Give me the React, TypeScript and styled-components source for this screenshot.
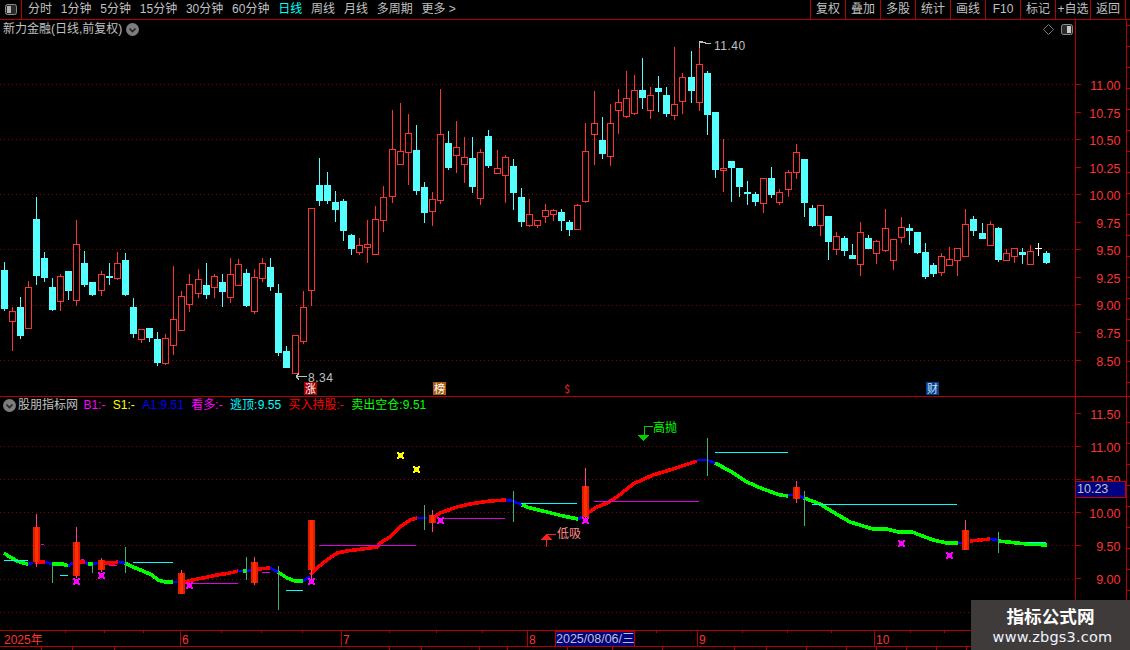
import React from "react";
import styled, { createGlobalStyle } from "styled-components";

const FRAME = "#b80000";
const RED = "#ff3232";
const CYAN = "#54ffff";
const GREY = "#c0c0c0";

const Global = createGlobalStyle`
  html, body { margin: 0; padding: 0; background: #000; overflow: hidden; }
  #root { width: 1130px; height: 650px; }
`;

const Page = styled.div`
  position: relative;
  width: 1130px;
  height: 650px;
  display: flex;
  flex-direction: column;
  overflow: hidden;
  background: #000;
  color: ${GREY};
  font: 12px "Liberation Sans", "Noto Sans CJK SC", sans-serif;
`;

const Toolbar = styled.div`
  flex: 0 0 20px;
  box-sizing: border-box;
  display: flex;
  align-items: center;
  border-bottom: 1px solid ${FRAME};
  line-height: 19px;
`;
const ToggleCell = styled.div`
  flex: 0 0 22px;
  height: 19px;
  box-sizing: border-box;
  border-right: 1px solid ${FRAME};
  display: flex;
  align-items: center;
  justify-content: center;
`;
const PeriodTabs = styled.div`
  display: flex;
  gap: 8.8px;
  margin-left: 6px;
  flex: 1;
`;
const PeriodTab = styled.span<{ $active?: boolean }>`
  color: ${(p) => (p.$active ? "#00ffff" : GREY)};
  white-space: nowrap;
`;
const ActionGroup = styled.div`
  display: flex;
  margin-right: 4px;
  border-right: 1px solid ${FRAME};
`;
const ActionButton = styled.span`
  width: 35px;
  height: 19px;
  box-sizing: border-box;
  border-left: 1px solid ${FRAME};
  text-align: center;
  white-space: nowrap;
`;

const ChartRow = styled.div<{ $h: number }>`
  flex: 0 0 ${(p) => p.$h}px;
  box-sizing: border-box;
  display: flex;
  border-bottom: 1px solid ${FRAME};
`;
const PlotArea = styled.div`
  position: relative;
  flex: 0 0 1075px;
`;
const AxisArea = styled.div`
  position: relative;
  flex: 1;
  box-sizing: border-box;
  border-left: 1px solid ${FRAME};
`;
const ChartSvg = styled.svg`
  display: block;
  position: absolute;
  top: 0;
  left: 0;
`;
const Legend = styled.div<{ $top: number; $gap: number }>`
  position: absolute;
  top: ${(p) => p.$top}px;
  left: 3px;
  display: flex;
  align-items: center;
  gap: ${(p) => p.$gap}px;
  line-height: 15px;
  white-space: nowrap;
  word-spacing: -3px;
`;
const LegendHead = styled.div`
  display: flex;
  align-items: center;
  gap: 2px;
  margin-right: -2px;
`;
const LegendItem = styled.span<{ $color: string }>`
  color: ${(p) => p.$color};
`;
const CornerTools = styled.div`
  position: absolute;
  top: 4px;
  right: 2px;
  display: flex;
  align-items: center;
  gap: 7px;
`;
const LastPriceBadge = styled.div`
  position: absolute;
  top: 84px;
  left: 0;
  width: 50px;
  height: 17px;
  box-sizing: border-box;
  background: #000080;
  border: 1px solid #c00000;
  border-left: none;
  padding-left: 1px;
  font-size: 12.5px;
  line-height: 15px;
  color: ${GREY};
`;

const TimeAxisRow = styled.div`
  flex: 0 0 16px;
  box-sizing: border-box;
  border-bottom: 1px solid ${FRAME};
  position: relative;
`;
const BottomTabs = styled.div`
  flex: 1;
  display: flex;
`;
const BottomTab = styled.span<{ $w: number }>`
  flex: 0 0 ${(p) => p.$w}px;
  box-sizing: border-box;
  border-right: 1px solid ${FRAME};
`;

const Watermark = styled.div`
  position: absolute;
  right: 0;
  bottom: 0;
  width: 159px;
  height: 50px;
  background: #3f3b3b;
  display: flex;
  flex-direction: column;
  align-items: center;
  padding-top: 4px;
  box-sizing: border-box;
`;
const WatermarkTitle = styled.div`
  font: bold 17.6px "Noto Sans CJK SC", sans-serif;
  line-height: 24px;
  color: #fff;
`;
const WatermarkUrl = styled.div`
  font: 14.5px "DejaVu Sans", sans-serif;
  line-height: 18px;
  color: #eef4ff;
  letter-spacing: 0.2px;
  transform: translateX(2px);
`;

const AxisText = styled.text`
  fill: ${RED};
  font: 12.5px "Liberation Sans", sans-serif;
  text-anchor: end;
`;
const TimeText = styled.text`
  fill: ${RED};
  font: 12px "Liberation Sans", "Noto Sans CJK SC", sans-serif;
`;
const DateText = styled.text`
  fill: ${GREY};
  font: 12.5px "Liberation Sans", "Noto Sans CJK SC", sans-serif;
`;
const PriceNote = styled.text`
  fill: ${GREY};
  font: 12px "Liberation Sans", sans-serif;
  letter-spacing: 0.5px;
`;
const BadgeText = styled.text<{ $color: string }>`
  fill: ${(p) => p.$color};
  font: 11px "Noto Sans CJK SC", sans-serif;
  text-anchor: middle;
`;
const SignalText = styled.text<{ $color: string }>`
  fill: ${(p) => p.$color};
  font: 12px "Noto Sans CJK SC", sans-serif;
`;

// x, 'r'/'c', high, bodyTop, bodyBottom, low — page pixel coordinates
type C = [number, "r" | "c", number, number, number, number];
const candles: C[] = [
  [4,"c",262,270,309,311],[12,"r",307,311,321,351],[20,"c",297,307,336,339],[28,"r",281,287,328,329],
  [36,"c",197,219,276,285],[44,"c",252,258,278,282],[52,"c",278,287,310,311],[60,"r",274,276,301,311],
  [68,"c",271,271,291,300],[76,"r",220,244,300,306],[84,"c",251,263,285,287],[92,"c",282,282,295,296],
  [101,"r",271,274,290,296],[109,"c",263,276,277,285],[117,"r",252,263,278,280],[125,"c",253,260,295,296],
  [133,"c",298,307,334,338],[141,"r",329,329,339,343],[149,"c",328,328,338,342],[157,"c",332,339,363,366],
  [165,"r",334,338,363,365],[173,"r",266,319,345,355],[181,"r",291,296,330,330],[189,"r",274,284,304,312],
  [198,"r",269,279,293,298],[206,"c",263,285,295,299],[214,"r",274,276,287,298],[222,"c",274,282,292,307],
  [230,"r",258,274,297,303],[238,"r",259,264,285,285],[246,"c",269,273,306,307],[254,"r",269,277,311,314],
  [262,"r",258,263,278,282],[270,"c",258,267,287,291],[278,"c",284,293,353,356],[286,"c",346,351,368,368],
  [295,"r",335,335,373,373],[303,"r",291,307,341,344],[311,"r",208,208,290,306],[319,"c",158,185,201,206],
  [327,"c",172,185,201,204],[335,"c",191,202,210,222],[343,"c",199,201,231,241],[351,"c",234,235,249,255],
  [359,"r",238,245,252,255],[367,"r",220,244,247,263],[375,"r",206,219,254,254],
  [383,"r",186,197,220,232],[392,"r",110,149,196,203],[400,"r",103,151,164,165],[408,"r",114,133,152,185],
  [416,"c",125,150,191,195],[424,"c",182,187,213,223],[432,"r",192,199,211,226],[440,"r",89,134,200,204],
  [448,"c",131,143,168,170],[456,"r",121,147,155,173],[464,"r",137,157,164,183],[472,"c",137,158,187,193],
  [480,"r",149,152,198,205],[488,"c",130,136,166,168],[497,"r",150,168,173,174],[505,"r",155,157,175,203],
  [513,"c",159,166,193,210],[521,"c",188,197,222,227],[529,"r",199,214,225,227],[537,"r",220,220,225,228],
  [545,"r",204,210,216,223],[553,"r",209,210,214,221],[561,"c",209,212,221,231],[569,"c",220,222,230,236],
  [577,"r",204,205,229,230],[585,"r",123,151,201,203],[594,"r",91,123,134,165],[602,"c",117,140,154,159],
  [610,"r",104,123,156,166],[618,"r",89,102,110,134],[626,"r",71,98,116,118],[634,"r",75,90,113,115],
  [642,"c",58,90,98,109],[650,"r",87,95,110,119],[658,"c",76,88,92,112],[666,"c",87,95,114,117],
  [674,"r",47,104,115,120],[682,"r",73,77,101,114],[691,"c",51,77,91,103],[699,"r",43,64,102,111],
  [707,"c",71,73,115,135],[715,"c",112,112,170,178],[723,"r",139,168,170,192],[731,"c",161,161,168,202],
  [739,"c",168,168,187,197],[747,"c",181,192,194,205],[755,"c",192,194,202,206],[763,"r",178,178,203,213],
  [771,"c",167,178,195,198],[779,"r",189,192,202,205],[788,"r",170,172,189,197],[796,"r",144,152,172,179],
  [804,"c",159,159,203,217],[812,"c",205,208,226,227],[820,"r",205,205,225,236],[828,"c",216,216,242,260],
  [836,"r",232,236,249,255],[844,"c",236,238,251,256],[852,"c",244,255,259,259],[860,"r",222,232,264,276],
  [868,"c",235,238,249,249],[876,"r",240,241,253,264],[885,"r",209,228,250,252],[893,"r",239,239,260,270],
  [901,"r",217,227,237,243],[909,"c",224,228,231,245],[917,"c",232,232,253,254],[925,"c",243,252,277,279],
  [933,"c",263,265,274,277],[941,"r",253,256,272,276],[949,"r",247,259,265,265],[957,"r",248,248,260,276],
  [965,"r",209,224,256,256],[973,"c",216,219,231,236],[982,"c",223,233,239,239],[990,"r",221,224,245,245],
  [998,"c",227,228,260,262],[1006,"r",249,253,260,260],[1014,"r",248,248,256,263],[1022,"c",248,252,255,264],
  [1030,"r",245,251,264,265],[1046,"c",251,253,263,264],
];

function Candle({ c }: { c: C }) {
  const [x, kind, hi, top, bot, lo] = c;
  const col = kind === "r" ? RED : CYAN;
  return (
    <g>
      {hi < top && <rect x={x} y={hi} width={1} height={top - hi} fill={col} />}
      {lo > bot && <rect x={x} y={bot} width={1} height={lo - bot} fill={col} />}
      {kind === "r" ? (
        <rect x={x - 2.5} y={top + 0.5} width={6} height={Math.max(bot - top, 1)} fill="#000" stroke={col} />
      ) : (
        <rect x={x - 3} y={top} width={7} height={Math.max(bot - top, 2)} fill={col} />
      )}
    </g>
  );
}

const dotted = (y: number, key: number) => (
  <line key={key} x1={0} x2={1075} y1={y + 0.5} y2={y + 0.5} stroke="#900000" strokeDasharray="1 3" />
);

const mainGrid = [84, 139, 194, 249, 305, 360];
const mainLabels: [string, number][] = [
  ["11.00", 85],["10.75", 113],["10.50", 140],["10.25", 168],["10.00", 195],["9.75", 223],
  ["9.50", 250],["9.25", 278],["9.00", 305],["8.75", 333],["8.50", 361],
];
const lowGrid = [446, 479, 512, 545, 579, 612];
const lowLabels: [string, number][] = [
  ["11.50", 414],["11.00", 447],["10.50", 480],["10.00", 513],["9.50", 546],["9.00", 579],
];

const SEG_COL: Record<string, string> = { g: "#00ff00", r: "#ff0000", b: "#0000ff" };
const segments: [string, string][] = [
  ["g","4,553 10,557 17,561 23,563 28,564"],["b","28,564 33,563"],["r","35,562 45,562"],["b","45,562 52,564"],
  ["g","52,564 63,564 68,566"],["b","68,566 73,563"],["r","78,562 85,562"],["b","85,562 88,564"],["g","88,564 93,564"],
  ["b","93,564 98,563"],["r","105,563 113,563 118,562"],["b","118,562 125,563"],
  ["g","125,563 133,567 143,571 152,575 158,580 165,582 173,582"],["b","173,582 178,582"],
  ["r","185,582 192,580 203,578 217,575 230,573 238,571"],["b","238,571 243,571"],["g","243,571 247,571"],["b","247,571 252,570"],
  ["r","258,569 270,568"],["b","270,568 278,572"],["g","278,572 287,578 295,581 303,581"],["b","303,581 310,577"],
  ["r","310,575 317,568 327,560 337,553 347,551 363,549 377,547 380,543 390,537 400,527 410,520 417,518"],
  ["b","417,518 427,518"],["r","435,517 440,513 457,507 470,504 490,501 506,500"],["b","506,500 513,501 522,505"],
  ["g","522,505 530,508 547,512 563,516 578,519"],["b","578,519 582,517"],
  ["r","588,513 595,508 607,503 617,497 633,484 653,475 673,469 697,461"],["b","697,460 707,460 715,463"],
  ["g","715,463 730,471 747,482 763,489 780,495 788,496"],["b","788,495 793,495"],["b","800,496 804,498"],
  ["g","804,498 820,504 833,512 850,522 873,529 887,529 898,532 912,532 933,540 947,543 958,543"],["b","958,543 962,543"],
  ["r","970,541 990,539"],["b","990,539 998,540"],["g","998,541 1017,543 1027,544 1047,545"],
];
// x, bodyTop, bodyBottom, wickTop, wickBottom
const bars = [
  [36,527,562,514,567],[76,542,576,527,578],[101,560,570,558,572],[181,573,594,570,594],[254,562,583,557,585],
  [311,520,570,520,580],[432,515,523,510,532],[585,486,517,468,523],[796,487,499,481,503],[965,530,550,520,550],
];
const greenTicks = [
  [52,565,583],[92,565,573],[125,547,573],[246,557,580],[278,566,610],[424,505,530],[513,491,522],[707,438,476],[804,491,526],[998,532,553],
];
const cyanLines = [
  [4,28,560],[60,68,575],[133,173,562],[286,303,590],[521,577,503],[715,788,452],[812,957,504],[1027,1046,542],
];
const magentaLines = [
  [41,44,544],[81,84,559],[109,117,565],[191,238,583],[262,270,572],[319,416,545],[442,505,518],[594,699,501],
];
const magentaMarks = [
  [76,581],[101,575],[189,585],[311,581],[440,520],[585,520],[901,543],[949,555],
];
const yellowMarks = [[400,455],[416,469]];

const Mark = ({ x, y, color }: { x: number; y: number; color: string }) => (
  <path d={`M${x - 3} ${y - 3}h2v1h3v-1h2v2h-1v3h1v2h-2v-1h-3v1h-2v-2h1v-3h-1z`} fill={color} />
);

const ToggleIcon = ({ left }: { left?: boolean }) => (
  <svg width="12" height="11" viewBox="0 0 12 11">
    <rect x="0.5" y="0.5" width="11" height="10" rx="2" fill="#2a2a2a" stroke="#8c8c8c" />
    <rect x={left ? 2 : 6} y="2" width="4" height="7" fill={left ? "#b0b0b0" : "#c8c8c8"} />
  </svg>
);
const Chevron = () => (
  <svg width="13" height="13" viewBox="0 0 13 13">
    <circle cx="6.5" cy="6.5" r="6.5" fill="#7d7d7d" />
    <path d="M3.5 5.5 L6.5 8.5 L9.5 5.5" fill="none" stroke="#222" strokeWidth="1.6" />
  </svg>
);
const Diamond = () => (
  <svg width="11" height="11" viewBox="0 0 11 11">
    <path d="M5.5 0.5 L10.5 5.5 L5.5 10.5 L0.5 5.5 Z" fill="none" stroke="#777" />
  </svg>
);

const periods = ["分时","1分钟","5分钟","15分钟","30分钟","60分钟","日线","周线","月线","多周期","更多 >"];
const actions = ["复权","叠加","多股","统计","画线","F10","标记","+自选","返回"];
const legend: [string, string][] = [
  ["B1:-","#ff00ff"],["S1:-","#ffff00"],["A1: 9.51","#0000ff"],["看多:-","#ff00ff"],
  ["逃顶: 9.55","#00ffff"],["买入持股:-","#ff0000"],["卖出空仓: 9.51","#00ff00"],
];
const timeMinor = [65,104,143,221,261,302,389,436,482,656,742,787,831,910,944];
const timeMajor: [string, number][] = [["6",181],["7",342],["8",528],["9",698],["10",875]];
const bottomTabs = [42,31,42,275,32,58,28,60,45,50,72,32,40,40,30,30,30,30,30,30,30,30,30];

const edgeTicks = (from: number, to: number) => {
  const out: React.ReactElement[] = [];
  let i = 0;
  for (let y = from; y < to; y += 21) {
    const long = i % 5 === 1;
    out.push(<rect key={y} x={long ? 1126 : 1127} y={y} width={long ? 4 : 3} height={1} fill={FRAME} />);
    i++;
  }
  return out;
};

export default function App() {
  return (
    <Page>
      <Global />
      <Toolbar>
        <ToggleCell><ToggleIcon left /></ToggleCell>
        <PeriodTabs>
          {periods.map((p) => <PeriodTab key={p} $active={p === "日线"}>{p}</PeriodTab>)}
        </PeriodTabs>
        <ActionGroup>
          {actions.map((a) => <ActionButton key={a}>{a}</ActionButton>)}
        </ActionGroup>
      </Toolbar>

      <ChartRow $h={377}>
        <PlotArea>
          <ChartSvg width={1075} height={376} viewBox="0 20 1075 376" shapeRendering="crispEdges">
            {mainGrid.map((y, i) => dotted(y, i))}
            {candles.map((c) => <Candle key={c[0]} c={c} />)}
            <rect x={1035} y={248} width={7} height={1} fill="#fff" />
            <rect x={1038} y={243} width={1} height={13} fill="#fff" />
            <g stroke={GREY} fill="none">
              <path d="M296 376.5H307M296 376.5l3 -3M296 376.5l3 3" />
              <path d="M699.5 48V41.5H703M700 43l4 -1 3 2 4 -1" />
            </g>
            <PriceNote x={308} y={382}>8.34</PriceNote>
            <PriceNote x={714} y={50}>11.40</PriceNote>
            <rect x={304} y={382} width={13} height={13} fill="#a00000" />
            <BadgeText $color="#ffffff" x={310.5} y={393}>涨</BadgeText>
            <rect x={433} y={382} width={13} height={13} fill="#a85a14" />
            <BadgeText $color="#ffffff" x={439.5} y={393}>榜</BadgeText>
            <BadgeText $color="#ff2020" x={567} y={393}>$</BadgeText>
            <rect x={926} y={382} width={13} height={13} fill="#0c3e8c" />
            <BadgeText $color="#b8e8ff" x={932.5} y={393}>财</BadgeText>
          </ChartSvg>
          <Legend $top={2} $gap={4}>
            <span>新力金融(日线,前复权)</span>
            <Chevron />
          </Legend>
          <CornerTools>
            <Diamond />
            <ToggleIcon />
          </CornerTools>
        </PlotArea>
        <AxisArea>
          <ChartSvg width={54} height={376} viewBox="1076 20 54 376" shapeRendering="crispEdges">
            {mainLabels.map(([t, y]) => (
              <g key={t}>
                <rect x={1076} y={y - 1} width={5} height={1} fill={FRAME} />
                <AxisText x={1120.5} y={y + 4.5}>{t}</AxisText>
              </g>
            ))}
            <rect x={1126} y={20} width={1} height={376} fill={FRAME} />
            {edgeTicks(25, 396)}
          </ChartSvg>
        </AxisArea>
      </ChartRow>

      <ChartRow $h={234}>
        <PlotArea>
          <ChartSvg width={1075} height={233} viewBox="0 397 1075 233" shapeRendering="crispEdges">
            {lowGrid.map((y, i) => dotted(y, i))}
            {segments.map(([c, pts], i) => (
              <polyline key={i} points={pts} fill="none" stroke={SEG_COL[c]} strokeWidth={c === "b" ? 2.6 : 3.6} />
            ))}
            {cyanLines.map(([a, b, y]) => <rect key={`c${a}`} x={a} y={y} width={b - a} height={1} fill="#00ffff" />)}
            {magentaLines.map(([a, b, y]) => <rect key={`m${a}`} x={a} y={y} width={b - a} height={1} fill="#e000e0" />)}
            {greenTicks.map(([x, a, b]) => <rect key={`t${x}`} x={x} y={a} width={1} height={b - a} fill="#3cb371" />)}
            {bars.map(([x, t, b, wt, wb]) => (
              <g key={`b${x}`}>
                <rect x={x} y={wt} width={1} height={wb - wt} fill="#ff4090" />
                <rect x={x - 3} y={t} width={7} height={b - t} fill="#e81a00" />
                <rect x={x - 1} y={t} width={3} height={b - t} fill="#ff3000" />
              </g>
            ))}
            {magentaMarks.map(([x, y]) => <Mark key={`x${x}`} x={x} y={y} color="#ff00ff" />)}
            {yellowMarks.map(([x, y]) => <Mark key={`y${x}`} x={x} y={y} color="#ffff00" />)}
            <path d="M653 426.5H644.5V435" fill="none" stroke="#00d000" />
            <path d="M638 435h11l-5.500 6z" fill="#00d000" />
            <SignalText $color="#00ff00" x={653} y={432}>高抛</SignalText>
            <path d="M556 534.500H546.500V547" fill="none" stroke="#ff2020" />
            <path d="M541 540h11l-5.500 -6z" fill="#ff2020" />
            <SignalText $color="#ff8a8a" x={557} y={538}>低吸</SignalText>
          </ChartSvg>
          <Legend $top={1} $gap={7.4}>
            <LegendHead>
              <Chevron />
              <LegendItem $color={GREY}>股朋指标网</LegendItem>
            </LegendHead>
            {legend.map(([t, c]) => <LegendItem key={t} $color={c}>{t}</LegendItem>)}
          </Legend>
        </PlotArea>
        <AxisArea>
          <ChartSvg width={54} height={233} viewBox="1076 397 54 233" shapeRendering="crispEdges">
            {lowLabels.map(([t, y]) => (
              <g key={t}>
                <rect x={1076} y={y - 1} width={5} height={1} fill={FRAME} />
                <AxisText x={1120.5} y={y + 4.5}>{t}</AxisText>
              </g>
            ))}
            <rect x={1126} y={397} width={1} height={233} fill={FRAME} />
            {edgeTicks(422, 630)}
          </ChartSvg>
          <LastPriceBadge>10.23</LastPriceBadge>
        </AxisArea>
      </ChartRow>

      <TimeAxisRow>
        <ChartSvg width={1130} height={15} viewBox="0 631 1130 15">
          <TimeText x={4} y={644}>2025年</TimeText>
          <g shapeRendering="crispEdges">
            {timeMinor.map((x) => <rect key={x} x={x} y={631} width={1} height={2} fill={FRAME} />)}
            {timeMajor.map(([, x]) => <rect key={x} x={x - 1} y={631} width={1} height={15} fill={FRAME} />)}
            <rect x={555} y={631} width={79} height={15} fill="#000080" stroke={FRAME} />
          </g>
          {timeMajor.map(([t, x]) => <TimeText key={t} x={x + 1} y={644}>{t}</TimeText>)}
          <DateText x={556} y={643}>2025/08/06/三</DateText>
        </ChartSvg>
      </TimeAxisRow>

      <BottomTabs>
        {bottomTabs.map((w, i) => <BottomTab key={i} $w={w} />)}
      </BottomTabs>

      <Watermark>
        <WatermarkTitle>指标公式网</WatermarkTitle>
        <WatermarkUrl>www.zbgs3.com</WatermarkUrl>
      </Watermark>
    </Page>
  );
}
